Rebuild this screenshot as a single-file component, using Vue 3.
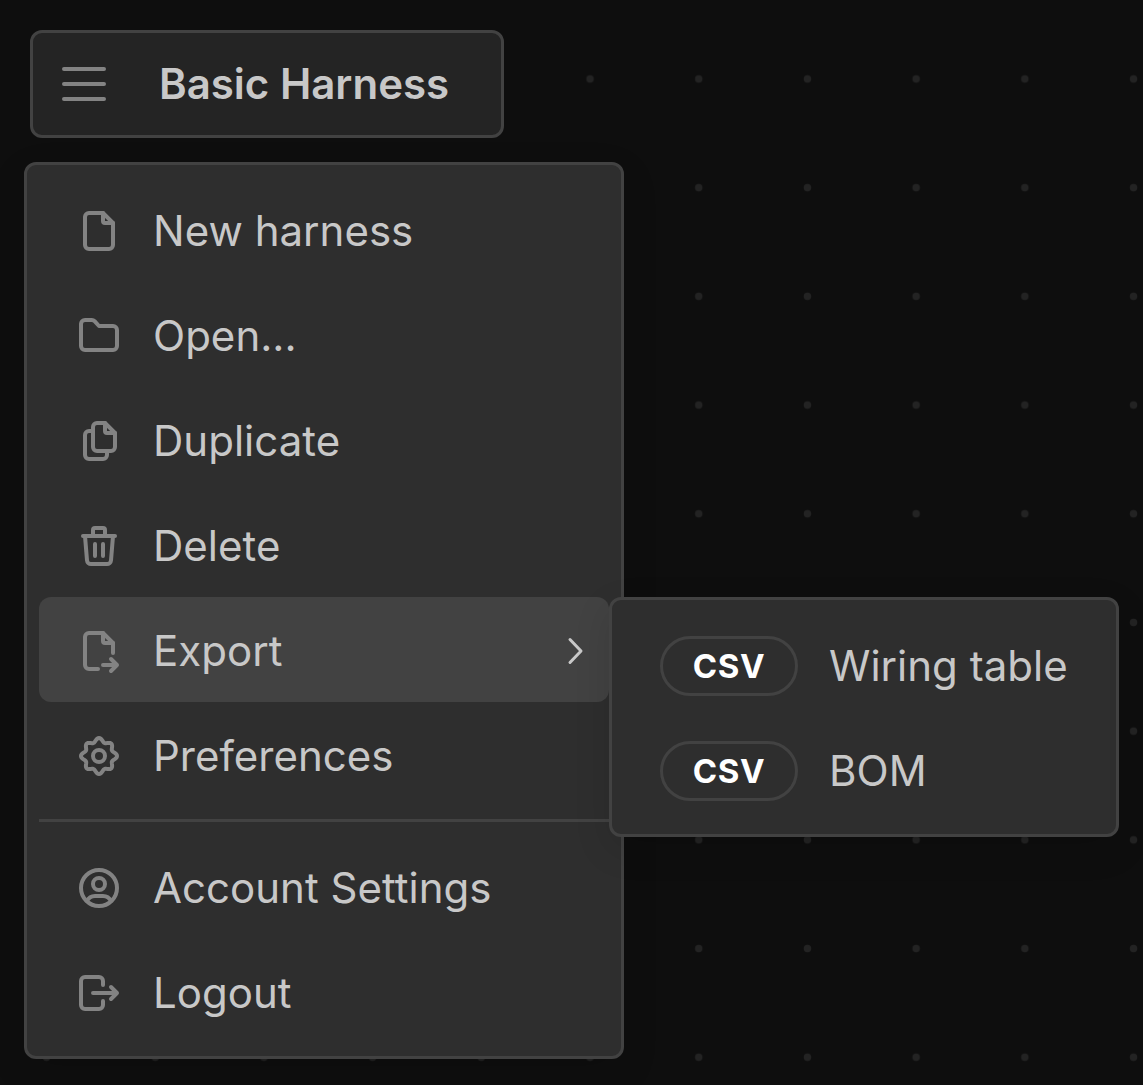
<script setup>
const gearPath = (() => {
  const points = []
  for (let i = 0; i < 144; i++) {
    const a = (i / 144) * Math.PI * 2
    const r = 15.9 + 1.8 * Math.cos(8 * a) + 0.3 * Math.cos(4 * a)
    points.push(`${(24 + r * Math.cos(a)).toFixed(2)} ${(24 + r * Math.sin(a)).toFixed(2)}`)
  }
  return `M${points.join('L')}Z`
})()

const mainItems = [
  {
    label: 'New harness',
    paths: ['M14 6H28L38 16V38a4 4 0 0 1-4 4H14a4 4 0 0 1-4-4V10a4 4 0 0 1 4-4Z', 'M28 6V14a2 2 0 0 0 2 2H38'],
  },
  {
    label: 'Open...',
    paths: ['M10 8h6.8a4 4 0 0 1 2.8 1.2L24 14H38a4 4 0 0 1 4 4V34a4 4 0 0 1-4 4H10a4 4 0 0 1-4-4V12a4 4 0 0 1 4-4Z'],
  },
  {
    label: 'Duplicate',
    paths: [
      'M22 6H30L40 16V30a4 4 0 0 1-4 4H22a4 4 0 0 1-4-4V10a4 4 0 0 1 4-4Z',
      'M30 6V14a2 2 0 0 0 2 2H40',
      'M18 14H14a4 4 0 0 0-4 4V38a4 4 0 0 0 4 4H28a4 4 0 0 0 4-4V34',
    ],
  },
  {
    label: 'Delete',
    paths: [
      'M8 14H40',
      'M18 14V8a2 2 0 0 1 2-2H28a2 2 0 0 1 2 2V14',
      'M10 14L12 38.3a4 4 0 0 0 4 3.7H32a4 4 0 0 0 4-3.7L38 14',
      'M20 22V34M28 22V34',
    ],
  },
  {
    label: 'Export',
    active: true,
    paths: [
      'M23 42H14a4 4 0 0 1-4-4V10a4 4 0 0 1 4-4H28L38 16V26',
      'M28 6V14a2 2 0 0 0 2 2H38',
      'M28 38H42M36 32L42 38L36 44',
    ],
  },
  { label: 'Preferences', paths: [gearPath, 'M18 24a6 6 0 1 0 12 0a6 6 0 1 0-12 0'] },
]

const accountItems = [
  {
    label: 'Account Settings',
    paths: [
      'M6 24a18 18 0 1 0 36 0a18 18 0 1 0-36 0',
      'M18 20a6 6 0 1 0 12 0a6 6 0 1 0-12 0',
      'M12 37C13.6 33.8 16.8 32 20 32H28C31.2 32 34.4 33.8 36 37',
    ],
  },
  {
    label: 'Logout',
    paths: [
      'M28 16V12a4 4 0 0 0-4-4H10a4 4 0 0 0-4 4V36a4 4 0 0 0 4 4H24a4 4 0 0 0 4-4V32',
      'M18 24H42M36 18L42 24L36 30',
    ],
  },
]

const groups = [mainItems, accountItems]
const exportOptions = ['Wiring table', 'BOM']
</script>

<template>
  <div class="canvas">
    <svg class="grid" width="1143" height="1085" aria-hidden="true">
      <defs>
        <pattern id="dots" x="-7.8" y="24.6" width="108.7" height="108.7" patternUnits="userSpaceOnUse">
          <circle cx="54.35" cy="54.35" r="3.7" fill="#232323" />
        </pattern>
      </defs>
      <rect width="1143" height="1085" fill="url(#dots)" />
    </svg>

    <header class="title-bar">
      <svg class="burger" width="48" height="48" viewBox="0 0 48 48">
        <path d="M4 9H44M4 24H44M4 39H44" />
      </svg>
      <h1>Basic Harness</h1>
    </header>

    <nav class="menu">
      <ul v-for="(group, index) in groups" :key="index">
        <li v-for="item in group" :key="item.label" :class="{ active: item.active }">
          <svg class="icon" width="48" height="48" viewBox="0 0 48 48">
            <path v-for="d in item.paths" :key="d" :d="d" />
          </svg>
          <span class="label">{{ item.label }}</span>
          <svg v-if="item.active" class="chevron" width="18" height="30" viewBox="0 0 18 30">
            <path d="M4 3.5L15 15L4 26.5" />
          </svg>
          <ul v-if="item.active" class="submenu">
            <li v-for="option in exportOptions" :key="option">
              <span class="format">CSV</span>
              <span class="label">{{ option }}</span>
            </li>
          </ul>
        </li>
      </ul>
    </nav>
  </div>
</template>

<style>
body {
  margin: 0;
  background: #0e0e0e;
}
</style>

<style scoped>
* {
  box-sizing: border-box;
}
.canvas {
  position: relative;
  display: flex;
  flex-direction: column;
  align-items: flex-start;
  gap: 24px;
  width: 1143px;
  height: 1085px;
  padding: 30px 24px 0;
  overflow: hidden;
  background: #0e0e0e;
  color: #c8c8c8;
  font-family: Inter, sans-serif;
  font-size: 42px;
  line-height: 1;
}
.grid {
  position: absolute;
  inset: 0;
}
.title-bar {
  position: relative;
  display: flex;
  align-items: center;
  gap: 51px;
  width: 474px;
  height: 108px;
  margin-left: 6px;
  padding-left: 27px;
  border: 3px solid #424242;
  border-radius: 12px;
  background: #242424;
}
h1 {
  margin: 0;
  font-size: 42px;
  font-weight: 600;
  white-space: nowrap;
}
path {
  fill: none;
  stroke: #838383;
  stroke-width: 4;
  stroke-linecap: round;
  stroke-linejoin: round;
}
.menu {
  position: relative;
  width: 600px;
  height: 897px;
  padding: 12px 12px 0;
  border: 3px solid #424242;
  border-radius: 12px;
  background: #2e2e2e;
  box-shadow: 0 12px 36px rgba(0, 0, 0, 0.12);
}
ul {
  margin: 0;
  padding: 0;
  list-style: none;
}
.menu > ul + ul {
  margin-top: 12px;
  padding-top: 12px;
  border-top: 3px solid #424242;
}
li {
  position: relative;
  display: flex;
  align-items: center;
  gap: 30px;
  height: 105px;
  padding: 3px 25px 0 36px;
  border-radius: 12px;
}
.menu > ul > li {
  width: 570px;
}
.active {
  background: #424242;
}
.icon,
.burger,
.chevron {
  flex: none;
}
.label {
  letter-spacing: 0.02px;
  white-space: nowrap;
}
.chevron {
  margin-left: auto;
}
.chevron path {
  stroke: #c8c8c8;
  stroke-width: 3;
}
.submenu {
  position: absolute;
  top: 0;
  left: 570px;
  width: 510px;
  height: 240px;
  padding: 12px;
  border: 3px solid #424242;
  border-radius: 12px;
  background: #2e2e2e;
  box-shadow: 0 12px 36px rgba(0, 0, 0, 0.12);
}
.submenu li {
  gap: 31px;
  padding-right: 0;
}
.format {
  display: flex;
  align-items: center;
  justify-content: center;
  flex: none;
  width: 138px;
  height: 60px;
  border: 3px solid #424242;
  border-radius: 30px;
  color: #fff;
  font-size: 33px;
  font-weight: 700;
  letter-spacing: 0.6px;
}
</style>
